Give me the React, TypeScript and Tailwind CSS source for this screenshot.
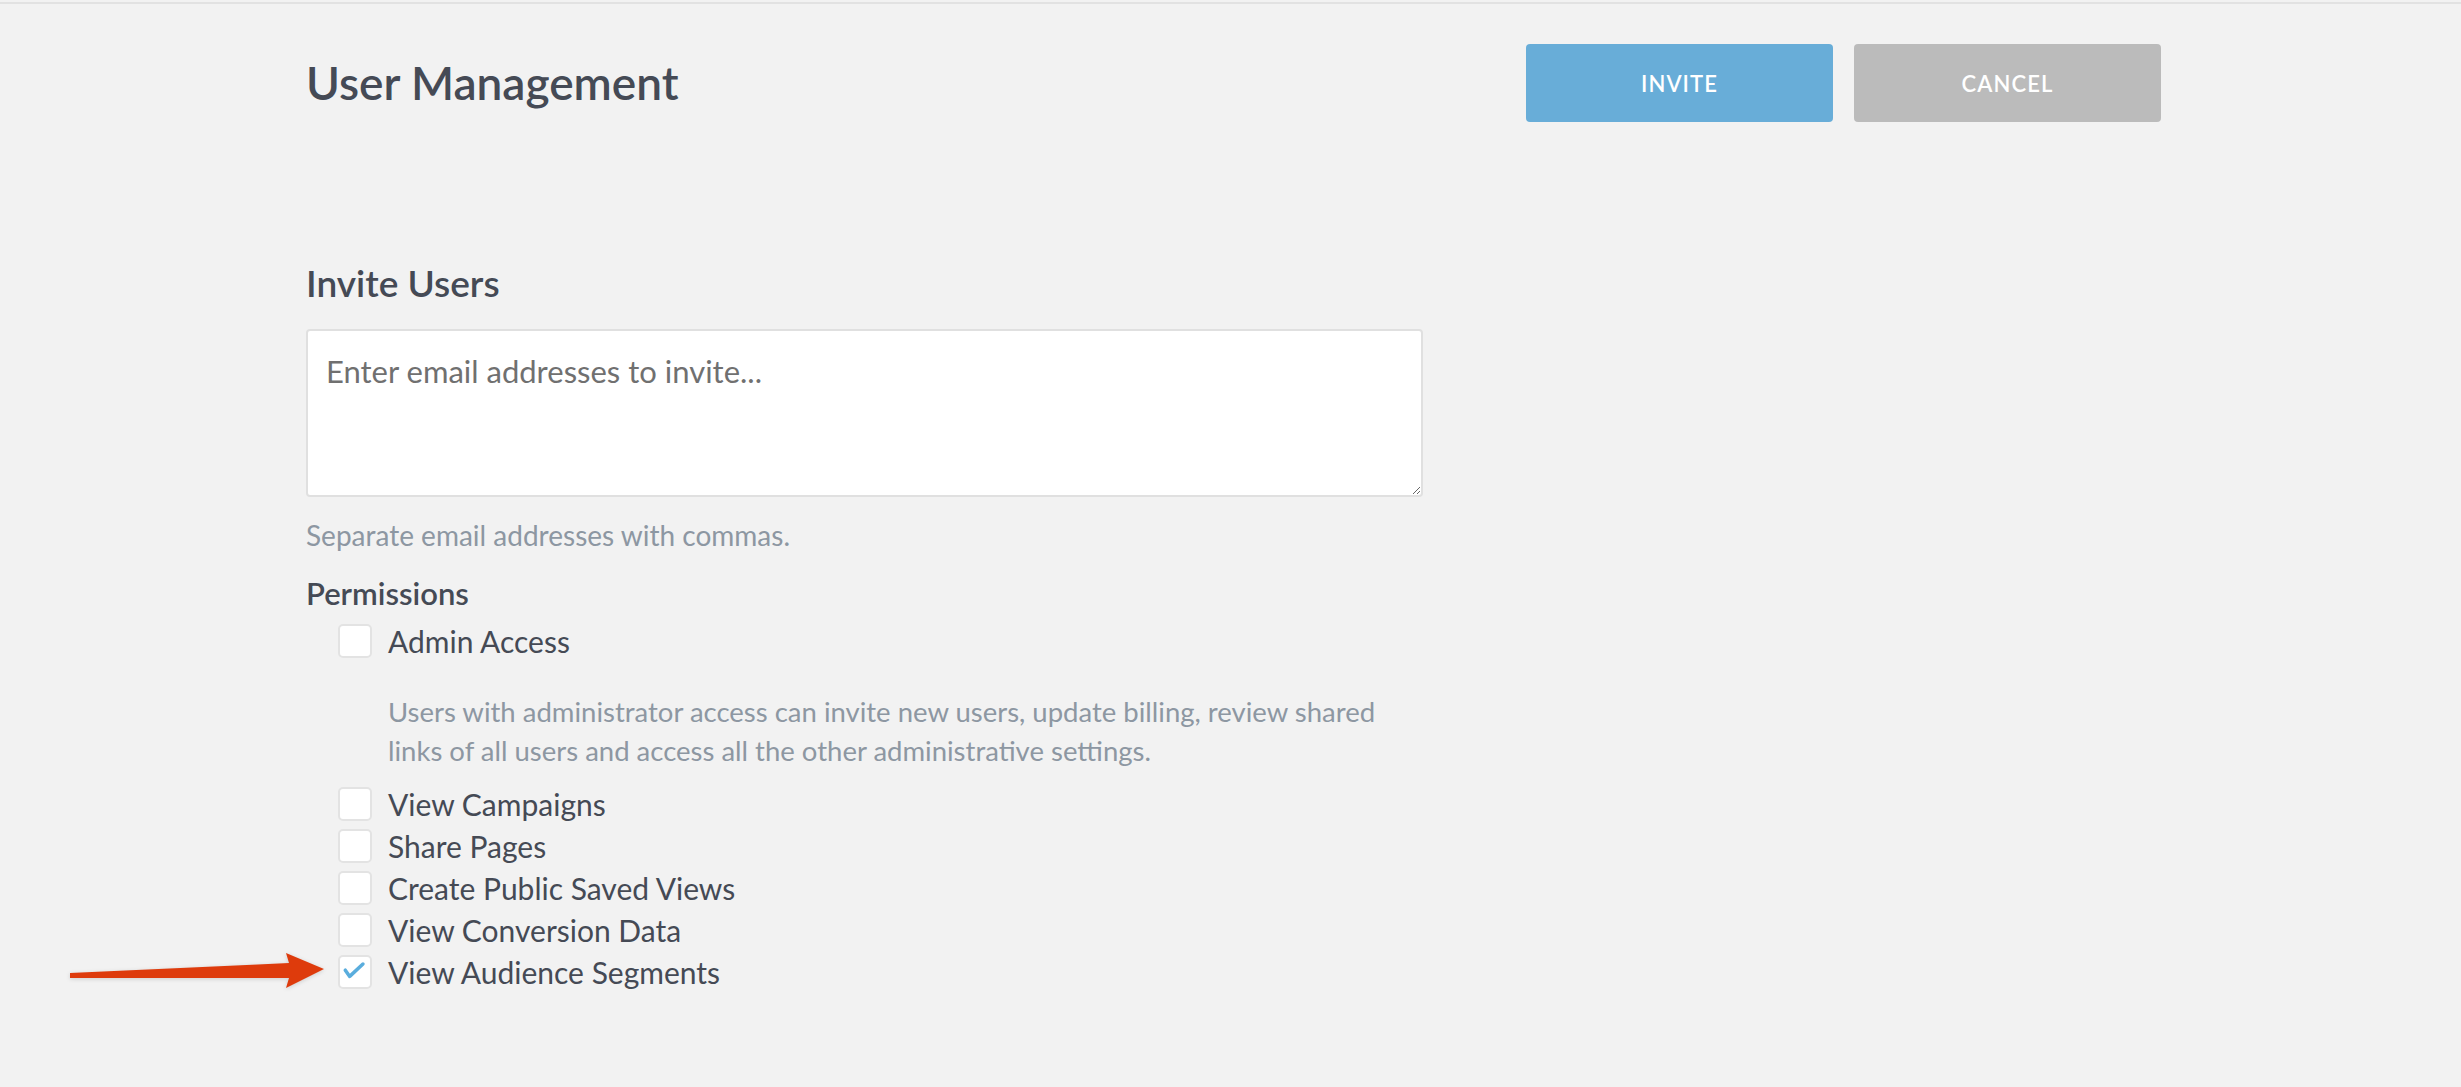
import React from "react";

const perms = [
  { label: "View Campaigns", checked: false },
  { label: "Share Pages", checked: false },
  { label: "Create Public Saved Views", checked: false },
  { label: "View Conversion Data", checked: false },
  { label: "View Audience Segments", checked: true },
];

function Box({ checked }: { checked?: boolean }) {
  return (
    <span className="flex h-[34px] w-[34px] shrink-0 items-center justify-center rounded-[5px] border-2 border-[#e3e3e3] bg-white">
      {checked && (
        <svg width="34" height="34" viewBox="0 0 34 34">
          <polyline points="6,15 11,22 26,8" fill="none" stroke="#5aaddd" strokeWidth="4" strokeLinecap="round" strokeLinejoin="round" />
        </svg>
      )}
    </span>
  );
}

function Arrow() {
  return (
    <svg className="absolute left-[-268px] top-[-4px] drop-shadow-sm" width="254" height="40" viewBox="0 0 254 40">
      <path d="M0 22 L219 12 L216 2 L254 18 L216 37 L219 27 L0 27 Z" fill="#de3b0c" />
    </svg>
  );
}

export default function App() {
  return (
    <div className="min-h-screen bg-[#f2f2f2] font-['Lato',sans-serif] text-[#454a55]">
      <div className="h-[2px]" />
      <div className="h-[2px] bg-[#e2e2e2]" />
      <div className="ml-[306px] w-[1855px]">
        <div className="flex items-center justify-between pt-[40px]">
          <h1 className="text-[46px] font-semibold leading-[56px]">User Management</h1>
          <div className="flex gap-[21px]">
            <button className="h-[78px] w-[307px] rounded-[4px] bg-[#68add8] text-[22px] font-semibold tracking-[0.05em] text-white">
              INVITE
            </button>
            <button className="h-[78px] w-[307px] rounded-[4px] bg-[#bbbbbb] text-[22px] font-semibold tracking-[0.05em] text-white">
              CANCEL
            </button>
          </div>
        </div>

        <div className="w-[1117px]">
          <h2 className="mt-[138px] text-[37px] font-semibold leading-[46px]">Invite Users</h2>
          <textarea
            placeholder="Enter email addresses to invite..."
            className="mt-[23px] block h-[168px] w-full rounded-[4px] border-2 border-[#e0e0e0] bg-white px-[18px] pt-[17px] text-[31px] placeholder:text-[#707070] outline-none"
          />
          <p className="mt-[20px] text-[28px] leading-[36px] text-[#8d97a2]">Separate email addresses with commas.</p>
          <h3 className="mt-[22px] text-[31px] font-semibold leading-[36px]">Permissions</h3>

          <div className="pl-[32px]">
            <label className="mt-[13px] flex items-center gap-[16px]">
              <Box />
              <span className="text-[30px] leading-[34px]">Admin Access</span>
            </label>
            <p className="mt-[34px] pl-[50px] text-[27.5px] leading-[39px] text-[#8d97a2]">
              Users with administrator access can invite new users, update billing, review shared links of all users and access all the other administrative settings.
            </p>
            <div className="mt-[17px] flex flex-col gap-[8px]">
              {perms.map((p, i) => (
                <label key={i} className="relative flex items-center gap-[16px]">
                  {p.checked && <Arrow />}
                  <Box checked={p.checked} />
                  <span className="text-[30px] leading-[34px]">{p.label}</span>
                </label>
              ))}
            </div>
          </div>
        </div>
      </div>
    </div>
  );
}
